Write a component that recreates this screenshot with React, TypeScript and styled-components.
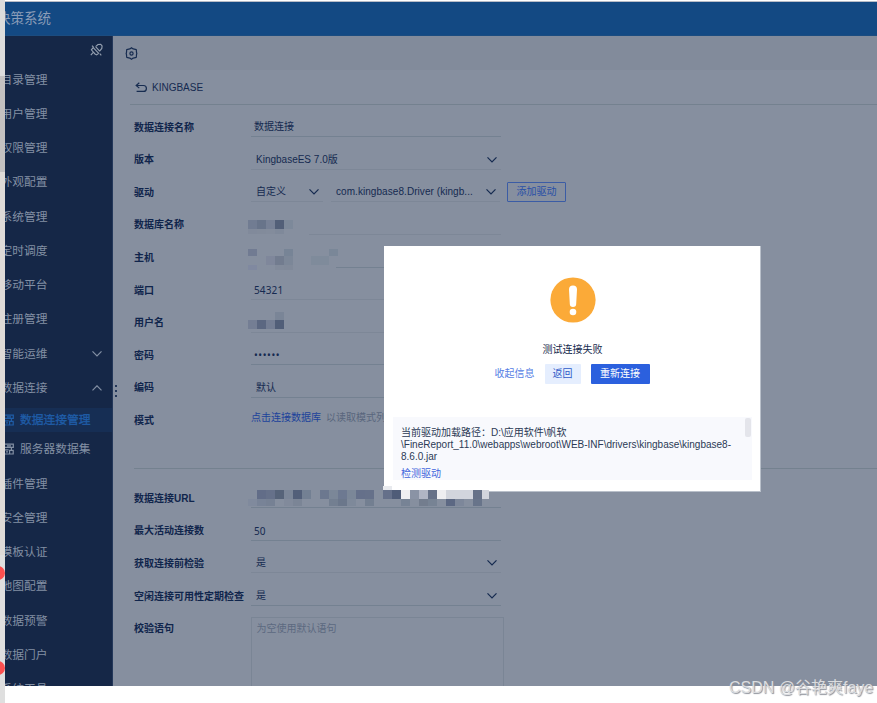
import React from "react";
import styled, { createGlobalStyle } from "styled-components";

const Global = createGlobalStyle`
  * { box-sizing: border-box; }
  body { margin: 0; background: #fff; overflow: hidden; }
`;

const Page = styled.div`
  position: relative;
  display: flex;
  width: 877px;
  height: 703px;
  overflow: hidden;
  background: #fff;
  color: #152a50;
  font: 10px/12px "Liberation Sans", "Noto Sans CJK SC", sans-serif;
  white-space: nowrap;
`;

const Gutter = styled.div`
  flex: none;
  width: 5px;
  background: linear-gradient(#dcdcdc 76px, #c3c1c1 76px, #c3c1c1 172px, #dedad7 172px, #dedad7 555px, #dfdfdf 555px);
`;

const Badge = styled.i<{ $y: number }>`
  position: absolute;
  left: -10px;
  top: ${(p) => p.$y}px;
  width: 14.5px;
  height: 14px;
  border-radius: 50%;
  background: #fc5050;
`;

const Shell = styled.div`
  display: flex;
  flex-direction: column;
  width: 872px;
  height: 685px;
  margin-top: 1px;
  border-top: 1px solid #b9bcc6;
  overflow: hidden;
`;

const Header = styled.header`
  display: flex;
  flex: none;
  align-items: center;
  height: 34px;
  background: #134983;
  border-bottom: 1px solid #1b4c80;
  color: #8a9cb7;
  font-size: 13.5px;
  line-height: 20px;
  span { margin-left: -8px; }
`;

const Body = styled.div`
  display: flex;
  flex: 1;
  min-height: 0;
`;

const Sidebar = styled.nav`
  position: relative;
  flex: none;
  width: 108px;
  overflow: hidden;
  background: #152747;
  border-right: 1px solid #24385a;
  color: #8390a4;
  font-size: 11.75px;
  line-height: 18px;
`;

const PinRow = styled.div`
  display: flex;
  justify-content: flex-end;
  height: 26px;
  padding: 7px 9px 0 0;
`;

const NavItem = styled.div`
  display: flex;
  align-items: center;
  justify-content: space-between;
  height: 34.25px;
  padding: 1px 10px 0 0;
  span { margin-left: -4.5px; }
`;

const SubItem = styled.div<{ $active?: boolean }>`
  display: flex;
  align-items: center;
  gap: 6px;
  height: ${(p) => (p.$active ? 24 : 34)}px;
  margin-top: ${(p) => (p.$active ? 3.5 : 0)}px;
  background: ${(p) => (p.$active ? "#162e54" : "none")};
  color: ${(p) => (p.$active ? "#1f5da8" : "#8390a4")};
  -webkit-text-stroke: ${(p) => (p.$active ? "0.3px" : "0")};
`;

const Main = styled.main`
  position: relative;
  flex: 1;
  min-width: 0;
  background: #868f9f;
`;

const Toolbar = styled.div`
  display: flex;
  align-items: center;
  height: 34px;
  padding-left: 12px;
  background: #828b9b;
`;

const TitleBar = styled.div`
  display: flex;
  align-items: center;
  gap: 4.5px;
  height: 35px;
  margin-left: 17px;
  padding: 2px 0 0 4.5px;
  border-bottom: 1px solid #74818f;
`;

const Section = styled.section<{ $divider?: boolean }>`
  margin-left: 21px;
  padding-top: ${(p) => (p.$divider ? 13 : 5.9)}px;
  height: ${(p) => (p.$divider ? 230 : 364)}px;
  border-bottom: ${(p) => (p.$divider ? "none" : "1px solid #74818f")};
`;

const Row = styled.div`
  position: relative;
  display: flex;
  align-items: center;
  height: 32.6px;
`;

const Label = styled.label`
  flex: none;
  width: 117px;
  padding-top: 1px;
  color: #10254c;
  font-weight: 700;
`;

const Field = styled.div<{ $w?: number; $pad?: number; $gap?: number; $faint?: boolean; $segoe?: boolean; $spacing?: number }>`
  display: flex;
  align-items: center;
  justify-content: space-between;
  width: ${(p) => p.$w ?? 250}px;
  height: 20px;
  margin-left: ${(p) => p.$gap ?? 0}px;
  padding: 1px 4px 0 ${(p) => p.$pad ?? 3}px;
  border-bottom: 1px solid ${(p) => (p.$faint ? "#7d8797" : "#748191")};
  letter-spacing: ${(p) => p.$spacing ?? 0}px;
  ${(p) => p.$segoe && `font-family: "Noto Sans", "Noto Sans CJK SC", sans-serif;`}
`;

const OutlineButton = styled.button`
  width: 59px;
  height: 20px;
  margin-left: 7px;
  padding: 0;
  border: 1px solid #3b5ca5;
  border-radius: 1px;
  background: none;
  color: #2950a6;
  font: inherit;
`;

const ModeText = styled.div`
  margin-top: -5px;
  color: #59667d;
  a { margin-right: 5px; color: #1c429b; }
`;

const TextArea = styled.div`
  align-self: flex-start;
  flex: none;
  width: 252.5px;
  height: 90px;
  margin-top: 5px;
  padding: 5px 4.5px;
  border: 1px solid #7a8595;
  color: #5c697f;
`;

const Dots = styled.div`
  display: flex;
  flex-direction: column;
  gap: 3px;
  position: absolute;
  left: 2px;
  top: 349px;
  i { width: 2px; height: 2px; background: #24385a; }
`;

const Blocks = styled.svg`
  position: absolute;
  z-index: 3;
  left: 114px;
  top: 7.6px;
  overflow: visible;
`;

const Modal = styled.div`
  position: absolute;
  z-index: 2;
  left: 384px;
  top: 246px;
  display: flex;
  flex-direction: column;
  align-items: center;
  width: 377px;
  height: 246px;
  padding: 31px 8px 0 9px;
  background: #fff;
  border-right: 1px solid #b9c0ca;
  border-bottom: 1px solid #b9c0ca;
`;

const ModalTitle = styled.div`
  margin-top: 21px;
  color: #14284c;
`;

const Actions = styled.div`
  display: flex;
  align-items: center;
  gap: 10px;
  height: 20px;
  margin: 8px 1px 0 0;
`;

const Action = styled.button<{ $kind: "link" | "soft" | "solid" }>`
  height: 20px;
  width: ${(p) => ({ link: 40, soft: 36, solid: 59 })[p.$kind]}px;
  padding: 0;
  border: 0;
  border-radius: 1px;
  background: ${(p) => ({ link: "none", soft: "#e5eefe", solid: "#2b60de" })[p.$kind]};
  color: ${(p) => ({ link: "#547de4", soft: "#2e5bc9", solid: "#fff" })[p.$kind]};
  font: inherit;
`;

const Info = styled.div`
  align-self: stretch;
  display: flex;
  justify-content: space-between;
  height: 63px;
  margin-top: 33px;
  padding: 1px 1.5px 0 8px;
  background: #f8f9fd;
  color: #2b3a55;
  p { margin: 9px 0 0; }
  a { display: block; margin-top: 5px; color: #4065dc; }
`;

const Thumb = styled.i`
  width: 6px;
  height: 19px;
  border-radius: 2px;
  background: #e4e5eb;
`;

const Watermark = styled.div`
  position: absolute;
  z-index: 4;
  left: 729px;
  top: 676px;
  color: #dadcdf;
  font: 16px/24px "Liberation Sans", "Noto Sans CJK SC", sans-serif;
  text-shadow: 1px 1px 1px #8c9099;
`;

const Chevron = ({ up = false }: { up?: boolean }) => (
  <svg width="10" height="6" viewBox="0 0 10 6" fill="none" stroke="currentColor" strokeWidth="1.2">
    <path d={up ? "M.5 5.3 5 .8l4.5 4.5" : "M.5.4 5 4.9 9.5.4"} />
  </svg>
);

const Pin = () => (
  <svg width="13" height="14" viewBox="0 0 13 14" fill="none" stroke="#95a0b0" strokeWidth="1.15">
    <path d="M3.2 4.6 8.7 10.4M3.2 4.6 1.4 6.8 3.2 9 5 11l1.6.9 2.1-1.5M3 9.6.8 12.2M2 2.6l1.9 2M9.7 10.5l1.6 1.9M5.6 3.7 8 1.5l2.7-.2 1.4 1.6-.3 2.5-2.2 2.7M5.6 3.7l4 4.4" />
  </svg>
);

const Gear = () => (
  <svg width="13" height="13" viewBox="0 0 13 13" fill="none" stroke="#172c50" strokeWidth="1.2">
    <path strokeLinejoin="round" d="M6.5.7 8.2 1.9l3.1.8.2 2.6.3 1.2-.3 1.2-.2 2.6-3.1.8-1.7 1.2-1.7-1.2-3.1-.8-.2-2.6-.3-1.2.3-1.2.2-2.6 3.1-.8z" />
    <circle cx="6.5" cy="6.5" r="1.6" />
  </svg>
);

const Back = () => (
  <svg width="13" height="12" viewBox="0 0 13 12" fill="none" stroke="#172c50" strokeWidth="1.2">
    <path d="M4.3.8 1.2 3.5l3.1 2.6M1.2 3.5h7.3c1.8 0 2.9 1 2.9 2.9 0 2-1.1 3-2.9 3H1.6" />
  </svg>
);

const DataIcon = () => (
  <svg width="9" height="12" viewBox="0 0 9 12" fill="none" stroke="currentColor" strokeWidth="1.2">
    <path d="M0 1.2h8.3v3.2H0M2 2.8h4M0 6.8h3.6M1 8.8h2M0 11h4M4.6 7.4h3.6V11H4.6zM6.4 4.4v3" />
  </svg>
);

type Cell = [x: number, y: number, w: number, h: number, color: string];
const strip = (x: number, y: number, h: number, colors: string): Cell[] =>
  colors.split(" ").flatMap((c, i): Cell[] => (c === "-" ? [] : [[x + i * 9, y, 9, h, `#${c}`]]));

const Mosaic = ({ cells }: { cells: Cell[] }) => (
  <Blocks width="245" height="25" viewBox="0 0 245 25" shapeRendering="crispEdges">
    {cells.map(([x, y, width, height, fill], i) => (
      <rect key={i} x={x} y={y} width={width} height={height} fill={fill} />
    ))}
  </Blocks>
);

const databaseCells = [...strip(0, 4, 9, "717c92 68748a 778196 525f78 7d899a"), ...strip(0, 13, 5, "818a9b 828b9b 838c9c 7f899a")];
const hostCells = [
  ...strip(0, 0, 7, "717b92 - - - 778496 - - - - -"),
  ...strip(18, 7, 9, "7f879b 727c8f 7c8798"),
  ...strip(0, 16, 5, "8089a0 - - 828b9b 818a9a"),
  ...strip(63, 7, 9, "7f8b9b 7f8b9b"),
  ...strip(81, 0, 7, "7a8798"),
];
const userCells = [...strip(27, -2, 8, "7a8597"), ...strip(0, 6, 9, "747e94 5b6781 747e94 515e78")];
const urlCells = [
  ...strip(0, 9, 7, "808a9d 788397 768194 - 818a9b 7b8596 - - - 737f91 6b778b 7e899a - 737f91 - - - 778395 - 737d8e 778394 - 5c6883 7d879a - 68748a"),
  ...strip(9, 0, 9, "626d88 66718a 566379 7b8698 525f79 738093 - 6c788f 7b8798 6d7991 7b8798 65708a 66718a - 65708a 4f5c78 efeff2 8a93a5 b0b5c4 667188 eeeef1 d2d5dd d2d5dd d2d5dd 667188"),
  [234, 0, 7, 9, "#d2d5dd"] as Cell,
  [135, -4, 9, 4, "#e8eaee"] as Cell,
];

const topMenu = ["目录管理", "用户管理", "权限管理", "外观配置", "系统管理", "定时调度", "移动平台", "注册管理"];
const bottomMenu = ["插件管理", "安全管理", "模板认证", "地图配置", "数据预警", "数据门户", "系统工具"];

export default function App() {
  return (
    <Page>
      <Global />
      <Gutter>
        <Badge $y={565.5} />
        <Badge $y={661} />
      </Gutter>
      <Shell>
        <Header><span>决策系统</span></Header>
        <Body>
          <Sidebar>
            <PinRow><Pin /></PinRow>
            {topMenu.map((t) => <NavItem key={t}><span>{t}</span></NavItem>)}
            <NavItem><span>智能运维</span><Chevron /></NavItem>
            <NavItem><span>数据连接</span><Chevron up /></NavItem>
            <SubItem $active><DataIcon />数据连接管理</SubItem>
            <SubItem><DataIcon />服务器数据集</SubItem>
            {bottomMenu.map((t) => <NavItem key={t}><span>{t}</span></NavItem>)}
          </Sidebar>
          <Main>
            <Toolbar><Gear /></Toolbar>
            <TitleBar><Back />KINGBASE</TitleBar>
            <Section>
              <Row><Label>数据连接名称</Label><Field>数据连接</Field></Row>
              <Row><Label>版本</Label><Field $pad={5} $faint>KingbaseES 7.0版<Chevron /></Field></Row>
              <Row>
                <Label>驱动</Label>
                <Field $w={72} $pad={5} $faint>自定义<Chevron /></Field>
                <Field $w={169} $gap={8} $pad={5} $spacing={0.06} $faint>com.kingbase8.Driver (kingb...<Chevron /></Field>
                <OutlineButton>添加驱动</OutlineButton>
              </Row>
              <Row><Label>数据库名称</Label><Field $w={192} $gap={58} $faint /><Mosaic cells={databaseCells} /></Row>
              <Row><Label>主机</Label><Field $w={165} $gap={85} /><Mosaic cells={hostCells} /></Row>
              <Row><Label>端口</Label><Field $segoe $faint $spacing={0.15}>54321</Field></Row>
              <Row><Label>用户名</Label><Field $faint /><Mosaic cells={userCells} /></Row>
              <Row><Label>密码</Label><Field $segoe $spacing={0.6}>••••••</Field></Row>
              <Row><Label>编码</Label><Field $pad={5}>默认</Field></Row>
              <Row><Label>模式</Label><ModeText><a>点击连接数据库</a>以读取模式列表</ModeText></Row>
            </Section>
            <Section $divider>
              <Row><Label>数据连接URL</Label><Field /><Mosaic cells={urlCells} /></Row>
              <Row><Label>最大活动连接数</Label><Field $segoe>50</Field></Row>
              <Row><Label>获取连接前检验</Label><Field $pad={5} $faint>是<Chevron /></Field></Row>
              <Row><Label>空闲连接可用性定期检查</Label><Field $pad={5}>是<Chevron /></Field></Row>
              <Row><Label>校验语句</Label><TextArea>为空使用默认语句</TextArea></Row>
            </Section>
            <Dots><i /><i /><i /></Dots>
          </Main>
        </Body>
      </Shell>
      <Modal>
        <svg width="46" height="46" viewBox="0 0 46 46">
          <circle cx="23" cy="23" r="22.6" fill="#fbaa38" />
          <path d="M19 12.5a4 4 0 0 1 8 0l-.8 14.2a3.2 3.2 0 0 1-6.4 0z" fill="#fff" />
          <circle cx="23" cy="35" r="3.3" fill="#fff" />
        </svg>
        <ModalTitle>测试连接失败</ModalTitle>
        <Actions>
          <Action $kind="link">收起信息</Action>
          <Action $kind="soft">返回</Action>
          <Action $kind="solid">重新连接</Action>
        </Actions>
        <Info>
          <p>
            当前驱动加载路径：D:\应用软件\帆软<br />
            \FineReport_11.0\webapps\webroot\WEB-INF\drivers\kingbase\kingbase8-<br />
            8.6.0.jar
            <a>检测驱动</a>
          </p>
          <Thumb />
        </Info>
      </Modal>
      <Watermark>CSDN @谷艳爽faye</Watermark>
    </Page>
  );
}
